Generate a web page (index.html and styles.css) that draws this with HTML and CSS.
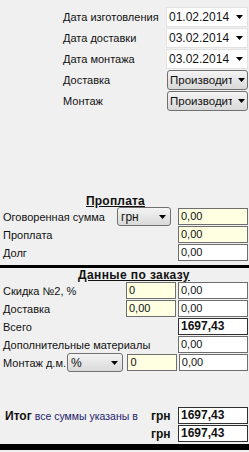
FILE: index.html
```html
<!DOCTYPE html>
<html lang="ru">
<head>
    <meta charset="UTF-8">
    <title>Заказ</title>
    <link rel="stylesheet" href="styles.css">
</head>
<body>

<!-- Даты и исполнители -->
<div class="dates">
    <div class="frow">
        <span class="lbl">Дата изготовления</span>
        <div class="date"><span class="val">01.02.2014</span><svg class="arr" width="7" height="4"><path d="M0 0h7L3.5 4z"/></svg></div>
    </div>
    <div class="frow">
        <span class="lbl">Дата доставки</span>
        <div class="date"><span class="val">03.02.2014</span><svg class="arr" width="7" height="4"><path d="M0 0h7L3.5 4z"/></svg></div>
    </div>
    <div class="frow">
        <span class="lbl">Дата монтажа</span>
        <div class="date"><span class="val">03.02.2014</span><svg class="arr" width="7" height="4"><path d="M0 0h7L3.5 4z"/></svg></div>
    </div>
    <div class="frow">
        <span class="lbl">Доставка</span>
        <div class="select big"><span class="val">Производит</span><svg class="arr" width="7" height="4"><path d="M0 0h7L3.5 4z"/></svg></div>
    </div>
    <div class="frow">
        <span class="lbl">Монтаж</span>
        <div class="select big"><span class="val">Производит</span><svg class="arr" width="7" height="4"><path d="M0 0h7L3.5 4z"/></svg></div>
    </div>
</div>

<!-- Проплата -->
<div class="pay">
    <div class="title t-pay">Проплата</div>
    <div class="row">
        <span class="lbl">Оговоренная сумма</span>
        <div class="select cur"><span class="val">грн</span><svg class="arr" width="7" height="4"><path d="M0 0h7L3.5 4z"/></svg></div>
        <div class="box yellow">0,00</div>
    </div>
    <div class="row">
        <span class="lbl">Проплата</span>
        <div class="box yellow">0,00</div>
    </div>
    <div class="row">
        <span class="lbl">Долг</span>
        <div class="box">0,00</div>
    </div>
</div>

<div class="line"></div>

<!-- Данные по заказу -->
<div class="order">
    <div class="title t-order">Данные по заказу</div>
    <div class="row">
        <span class="lbl">Скидка №2, %</span>
        <div class="box yellow small">0</div>
        <div class="box">0,00</div>
    </div>
    <div class="row">
        <span class="lbl">Доставка</span>
        <div class="box yellow small">0,00</div>
        <div class="box">0,00</div>
    </div>
    <div class="row">
        <span class="lbl">Всего</span>
        <div class="box bold">1697,43</div>
    </div>
    <div class="row">
        <span class="lbl">Дополнительные материалы</span>
        <div class="box">0,00</div>
    </div>
    <div class="row">
        <span class="lbl short">Монтаж д.м.</span>
        <div class="select pct"><span class="val">%</span><svg class="arr" width="7" height="4"><path d="M0 0h7L3.5 4z"/></svg></div>
        <div class="box yellow small">0</div>
        <div class="box">0,00</div>
    </div>
</div>

<!-- Итог -->
<div class="total">
    <div class="row">
        <span class="lbl"><b class="itog">Итог</b> <span class="note">все суммы указаны в</span></span>
        <b class="cur-lbl">грн</b>
        <div class="box bold">1697,43</div>
    </div>
    <div class="row">
        <span class="lbl"></span>
        <b class="cur-lbl">грн</b>
        <div class="box bold">1697,43</div>
    </div>
</div>

<div class="line bottom"></div>

</body>
</html>
```

FILE: styles.css
```css
body {
    margin: 0;
    background: #f0f0f0;
    font-family: "Liberation Sans", Arial, sans-serif;
    font-size: 11px;
    color: #111;
    width: 249px;
    overflow: hidden;
}
.dates {
    padding: 7px 1px 0 63px;
    display: flex;
    flex-direction: column;
    gap: 1px;
}
.frow {
    display: flex;
    align-items: center;
    height: 20px;
}
.frow .lbl {
    flex: 1;
}
.date, .select {
    display: flex;
    align-items: center;
    box-sizing: border-box;
    height: 20px;
    overflow: hidden;
}
.date {
    width: 82px;
    background: #fff;
    border: 1px solid #e2e2e2;
    padding: 0 4px 0 2px;
    font-size: 12px;
}
.select {
    border: 1px solid #707070;
    border-radius: 3px;
    background: linear-gradient(#f4f4f4, #e6e6e6 50%, #d9d9d9);
    padding: 0 4px 0 3px;
}
.val {
    flex: 1;
    white-space: nowrap;
    overflow: hidden;
}
.arr {
    flex: none;
    margin-left: 2px;
}
.select.big {
    width: 81px;
    height: 20px;
    padding: 0 4px 0 2px;
}
.select.big .val {
    flex: none;
    width: 62px;
    font-size: 11.5px;
    margin-right: 4px;
}
.pay {
    margin-top: 83px;
}
.title {
    font-weight: bold;
    font-size: 12px;
    line-height: 14px;
    text-decoration: underline;
    letter-spacing: 0.2px;
}
.t-pay {
    padding-left: 86px;
}
.t-order {
    padding-left: 78px;
    letter-spacing: 0.4px;
}
.row {
    display: flex;
    align-items: center;
    height: 17px;
    padding: 0 1px 0 3px;
    margin-bottom: 1px;
}
.row .lbl {
    flex: 1;
    white-space: nowrap;
}
.row .lbl.short {
    flex: none;
    width: 64px;
}
.box {
    box-sizing: border-box;
    width: 70px;
    height: 17px;
    line-height: 15px;
    border: 1px solid #6e6e6e;
    background: #fff;
    padding-left: 2px;
    margin-left: 1px;
}
.box.yellow {
    background: #ffffe1;
}
.box.small {
    width: 50px;
    margin-right: 1px;
}
.box.bold {
    font-weight: bold;
    font-size: 12px;
    border-color: #303030;
}
.select.cur {
    width: 54px;
    height: 19px;
    margin-right: 6px;
    font-size: 12px;
}
.select.pct {
    width: 57px;
    height: 19px;
    margin-right: 3px;
    font-size: 12px;
}
.line {
    height: 3px;
    background: #000;
    margin-top: 4px;
}
.total {
    margin-top: 36px;
}
.itog {
    font-size: 12px;
    margin-left: 2px;
}
.note {
    color: #1c1c6e;
    font-size: 10.5px;
}
.cur-lbl {
    font-size: 12px;
    width: 26px;
}
.line.bottom {
    height: 6px;
    margin-top: 2px;
}
```
